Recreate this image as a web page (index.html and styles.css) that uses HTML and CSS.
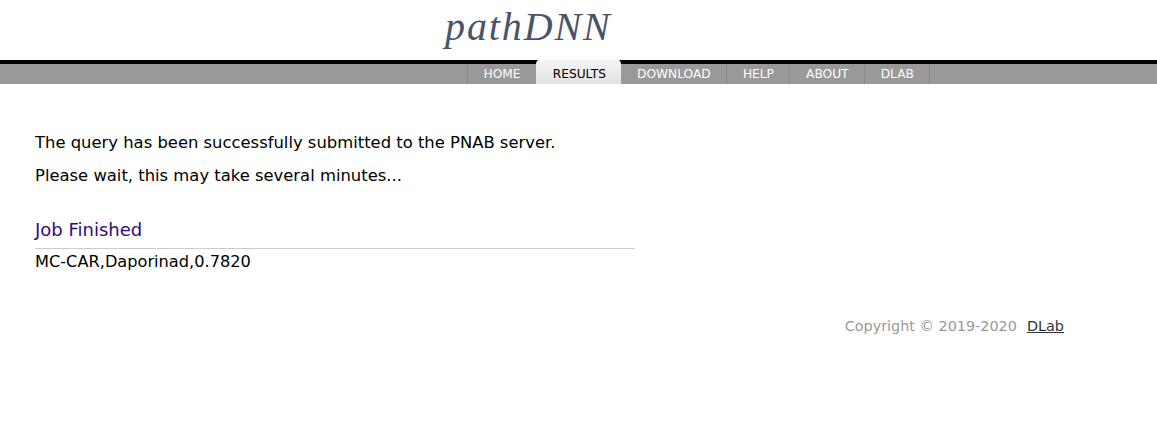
FILE: index.html
```html
<!DOCTYPE html>
<html>
<head>
<meta charset="utf-8">
<link rel="stylesheet" href="styles.css">
</head>
<body>
<header class="header">
  <div class="brand">pathDNN</div>
</header>
<nav class="nav">
  <ul class="tabs">
    <li class="tab"><a href="#">HOME</a></li>
    <li class="tab active"><a href="#">RESULTS</a></li>
    <li class="tab"><a href="#">DOWNLOAD</a></li>
    <li class="tab"><a href="#">HELP</a></li>
    <li class="tab"><a href="#">ABOUT</a></li>
    <li class="tab"><a href="#">DLAB</a></li>
  </ul>
</nav>
<main class="content">
  <p class="msg">The query has been successfully submitted to the PNAB server.</p>
  <p class="msg">Please wait, this may take several minutes...</p>
  <h3 class="job">Job Finished</h3>
  <div class="result">MC-CAR,Daporinad,0.7820</div>
</main>
<footer class="footer">
  <span class="copy">Copyright © 2019-2020</span>
  <a class="dlab" href="#">DLab</a>
</footer>
</body>
</html>
```
FILE: styles.css
```css
html, body {
  margin: 0;
  padding: 0;
  background: #fff;
  font-family: "DejaVu Sans", Verdana, sans-serif;
}
.header {
  height: 60px;
  padding-left: 445px;
  box-sizing: border-box;
}
.brand {
  font-family: "Liberation Serif", "Times New Roman", serif;
  font-style: italic;
  font-size: 40px;
  letter-spacing: 1.9px;
  color: #4a5468;
  line-height: 54px;
}
.nav {
  border-top: 4px solid #000;
  background: #999;
  height: 20px;
}
.tabs {
  list-style: none;
  margin: 0;
  padding: 0 0 0 467px;
  display: flex;
  height: 20px;
}
.tab {
  border-left: 1px solid #888;
  height: 20px;
}
.tab:last-child {
  border-right: 1px solid #888;
}
.tab a {
  display: block;
  color: #fff;
  text-decoration: none;
  font-size: 12.2px;
  line-height: 21px;
  padding: 0 15.6px;
}
.tab.active {
  border-left: none;
  margin-top: -5px;
  height: 25px;
}
.tab.active + .tab { border-left: none; }
.tab.active a {
  color: #000;
  background: linear-gradient(#f6f6f6, #e2e2e2);
  border-radius: 5px 5px 0 0;
  height: 25px;
  box-sizing: border-box;
  padding-top: 1px;
  line-height: 29px;
  padding-left: 16.6px;
  padding-right: 15.6px;
}
.content {
  padding: 49px 35px 0 35px;
}
.msg {
  margin: 0 0 14px 0;
  font-size: 16.4px;
  line-height: 19px;
  color: #000;
}
.job {
  margin: 34px 0 0 0;
  font-weight: normal;
  font-size: 18px;
  line-height: 22px;
  color: #2e0d80;
  width: 600px;
  padding-bottom: 7px;
  border-bottom: 1px solid #ccc;
}
.result {
  font-size: 16.2px;
  line-height: 26px;
  color: #000;
}
.footer {
  display: flex;
  justify-content: flex-end;
  padding: 42px 93px 0 0;
  font-size: 14.4px;
  line-height: 18px;
}
.copy { color: #999; }
.dlab {
  color: #333;
  margin-left: 10px;
}
```
